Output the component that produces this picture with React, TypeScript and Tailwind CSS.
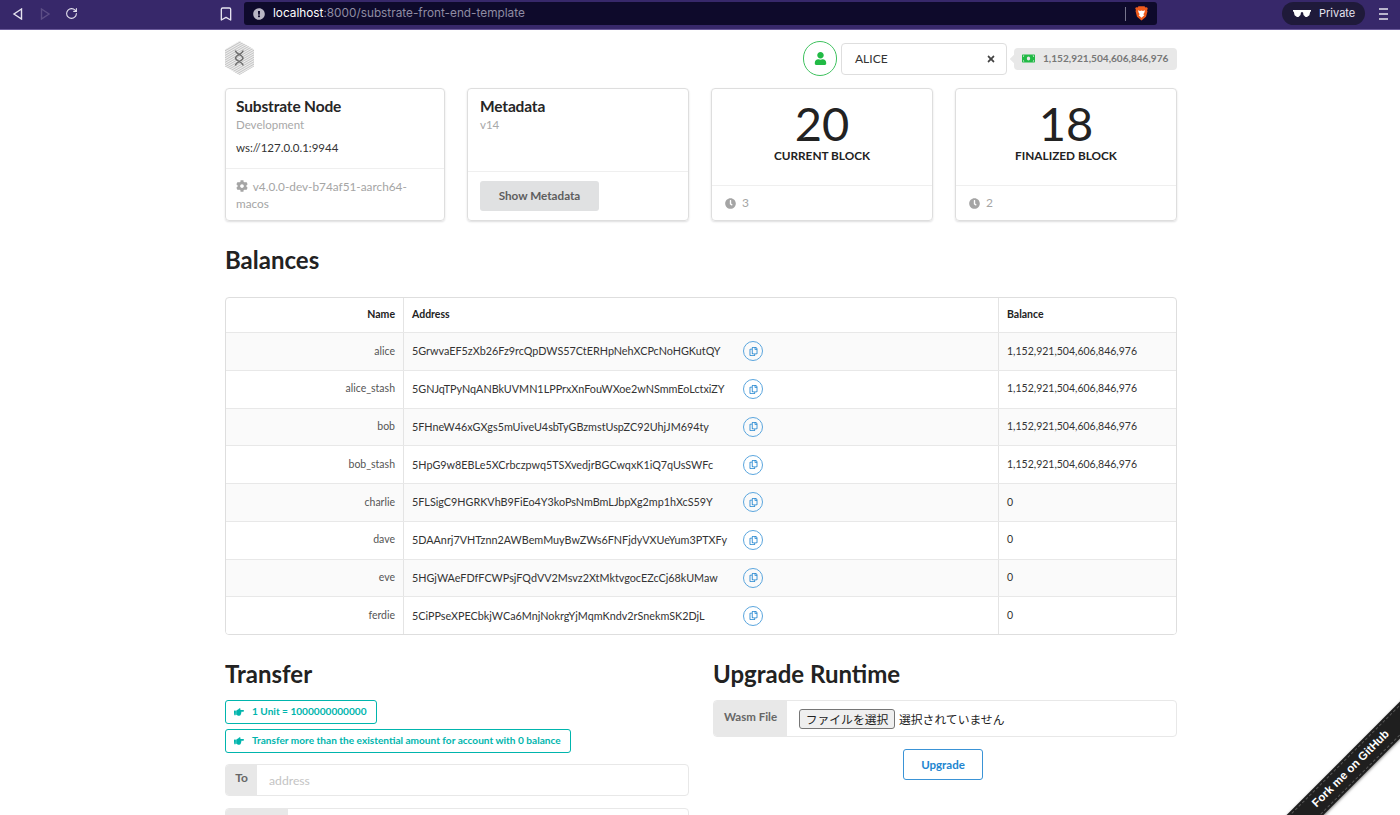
import { Bookmark, RotateCw } from 'lucide-react';
import { FaClock, FaCog, FaRegCopy, FaHandPointRight, FaMoneyBill, FaTimes, FaUser, FaExclamationCircle } from 'react-icons/fa';

const accounts = [
  { name: 'alice', address: '5GrwvaEF5zXb26Fz9rcQpDWS57CtERHpNehXCPcNoHGKutQY', balance: '1,152,921,504,606,846,976', shaded: true },
  { name: 'alice_stash', address: '5GNJqTPyNqANBkUVMN1LPPrxXnFouWXoe2wNSmmEoLctxiZY', balance: '1,152,921,504,606,846,976', shaded: false },
  { name: 'bob', address: '5FHneW46xGXgs5mUiveU4sbTyGBzmstUspZC92UhjJM694ty', balance: '1,152,921,504,606,846,976', shaded: true },
  { name: 'bob_stash', address: '5HpG9w8EBLe5XCrbczpwq5TSXvedjrBGCwqxK1iQ7qUsSWFc', balance: '1,152,921,504,606,846,976', shaded: false },
  { name: 'charlie', address: '5FLSigC9HGRKVhB9FiEo4Y3koPsNmBmLJbpXg2mp1hXcS59Y', balance: '0', shaded: true },
  { name: 'dave', address: '5DAAnrj7VHTznn2AWBemMuyBwZWs6FNFjdyVXUeYum3PTXFy', balance: '0', shaded: false },
  { name: 'eve', address: '5HGjWAeFDfFCWPsjFQdVV2Msvz2XtMktvgocEZcCj68kUMaw', balance: '0', shaded: true },
  { name: 'ferdie', address: '5CiPPseXPECbkjWCa6MnjNokrgYjMqmKndv2rSnekmSK2DjL', balance: '0', shaded: false },
];

function BrowserBar() {
  return (
    <div className="flex h-[30px] items-center border-b border-[#6a5a9a] bg-[#37286a] font-['Inter',sans-serif]">
      <div className="flex w-[244px] items-center pb-[2px] pl-[12px]">
        <svg width="11" height="12" viewBox="0 0 11 12" fill="none" stroke="#e6e3ef" strokeWidth="1.4"><path d="M9.500 1 2 6l7.500 5z" /></svg>
        <svg className="ml-[17px]" width="11" height="12" viewBox="0 0 11 12" fill="none" stroke="#5d4e86" strokeWidth="1.4"><path d="M1.500 1 9 6l-7.500 5z" /></svg>
        <RotateCw className="ml-[14px] text-[#e6e3ef]" size={13} strokeWidth={2} />
        <Bookmark className="ml-[140px] shrink-0 text-[#e6e3ef]" size={16} strokeWidth={2} />
      </div>
      <div className="mb-[2px] flex h-[23px] w-[913px] items-center rounded-[3px] bg-[#0e0a2b] pl-[9px]">
        <FaExclamationCircle className="text-[#b9b6c4]" size={12} />
        <span className="ml-[8px] text-[11.8px] text-white">localhost<span className="text-[#8f8ca3]">:8000/substrate-front-end-template</span></span>
        <div className="ml-auto mr-[9px] h-[14px] w-px bg-[#77758c]" />
        <svg className="mr-[9px]" width="13" height="15" viewBox="0 0 13 15">
          <path d="M3.500 0.300h6l1 1.200 1.500-.2.800 1.500-.8 1.500.5 1-1.500 5.500-4.500 3.700-4.500-3.700L.500 5l.5-1-.8-1.500L1 1.300l1.500.2z" fill="#ee5a1c" />
          <path d="M3 4.200 5 5l1.500-.5L8 5l2-.8-.6 2.300-1.100 1.700 1 1-2.800 2.600L3.700 9.200l1-1-1.100-1.700z" fill="#fff" />
        </svg>
      </div>
      <div className="mb-[2px] ml-auto mr-[14px] flex h-[23px] w-[83px] items-center gap-[8px] rounded-full bg-[#1f1a3a] pl-[11px] text-[11px] text-[#e6e3ef]">
        <svg width="18" height="7" viewBox="0 0 18 7" fill="#fff"><path d="M0 0h18v1.400l-.8.4-.8 3.400L14 7h-1.500L10.500 5 10 2.300H8L7.500 5 5.500 7H4L1.600 5.200.8 1.800 0 1.400z" /></svg>
        Private
      </div>
      <div className="mb-[2px] mr-[12px] flex w-[9px] flex-col gap-[3px]">
        <div className="h-[2px] bg-[#b9b5cc]" />
        <div className="h-[2px] bg-[#b9b5cc]" />
        <div className="h-[2px] bg-[#b9b5cc]" />
      </div>
    </div>
  );
}

function Logo() {
  return (
    <svg width="29" height="34" viewBox="0 0 29 34">
      <defs>
        <pattern id="hatch" width="2" height="2" patternUnits="userSpaceOnUse" patternTransform="rotate(-30)">
          <rect width="2" height="1" fill="#c4c4c4" />
          <rect y="1" width="2" height="1" fill="#f0f0f0" />
        </pattern>
      </defs>
      <path d="M14.500 0 29 8.500v17L14.500 34 0 25.500v-17z" fill="url(#hatch)" />
      <path d="M10.500 9.500c0 3.500 7.500 4.500 7.500 7.500s-7.500 4-7.500 7.500M18 9.500c0 3.500-7.500 4.500-7.500 7.500s7.500 4 7.500 7.500" fill="none" stroke="#6e6e6e" strokeWidth="1.500" />
    </svg>
  );
}

function Header() {
  return (
    <div className="flex h-[58px] items-start justify-between pt-[11px]">
      <Logo />
      <div className="flex items-center">
        <div className="flex h-[35px] w-[34px] items-center justify-center rounded-full border border-[#3fc25f] text-[#21ba45]">
          <FaUser size={13} />
        </div>
        <div className="ml-[4px] flex h-[32px] w-[166px] items-center justify-between rounded-[4px] border border-[#dedede] pl-[13px] pr-[10px] text-[12px] text-[#333]">
          ALICE
          <FaTimes size={10} className="text-[#444]" />
        </div>
        <div className="relative ml-[7px] flex h-[22px] w-[163px] items-center rounded-[4px] bg-[#e8e8e8] pl-[8px] text-[10.1px] font-bold text-[#777]">
          <div className="absolute -left-[3px] top-[8px] h-[6px] w-[6px] rotate-45 bg-[#e8e8e8]" />
          <FaMoneyBill size={13} className="mr-[8px] text-[#21ba45]" />
          1,152,921,504,606,846,976
        </div>
      </div>
    </div>
  );
}

function Card({ children, footer, footerClass }: { children: React.ReactNode; footer: React.ReactNode; footerClass: string }) {
  return (
    <div className="flex h-[133px] flex-col rounded-[4px] border border-[#dedede] shadow-[0_1px_2px_rgba(34,36,38,0.15)]">
      <div className="flex-1">{children}</div>
      <div className={`border-t border-[#efefef] ${footerClass}`}>{footer}</div>
    </div>
  );
}

function BlockCard({ value, label, since }: { value: string; label: string; since: string }) {
  return (
    <Card
      footerClass="flex h-[35px] items-center gap-[6px] px-[13px] text-[12px] text-[#a5a5a5]"
      footer={<><FaClock size={11} />{' '}{since}</>}
    >
      <div className="pt-[9px] text-center text-[#222]">
        <div className="text-[47px] leading-[50px]">{value}</div>
        <div className="text-[11.8px] font-bold leading-[16px]">{label}</div>
      </div>
    </Card>
  );
}

function Cards() {
  return (
    <div className="grid grid-cols-[220px_222px_222px_222px] gap-[22px]">
      <Card
        footerClass="h-[52px] px-[10px] pt-[9px] text-[11.8px] leading-[17px] text-[#a5a5a5]"
        footer={<><FaCog size={12} className="mr-[2px] inline align-[-1px]" /> v4.0.0-dev-b74af51-aarch64-macos</>}
      >
        <div className="px-[10px] pt-[7px]">
          <div className="text-[15.5px] font-bold leading-[20px] tracking-[-0.01em] text-[#262626]">Substrate Node</div>
          <div className="mt-[1px] text-[11.5px] leading-[16px] text-[#a8a8a8]">Development</div>
          <div className="mt-[7px] text-[11.5px] leading-[16px] text-[#333]">ws://127.0.0.1:9944</div>
        </div>
      </Card>
      <Card
        footerClass="h-[49px] px-[12px] pt-[9px]"
        footer={<button className="h-[30px] w-[119px] rounded-[3px] bg-[#e0e1e2] text-[11.7px] font-bold text-[#5e5e5e]">Show Metadata</button>}
      >
        <div className="px-[12px] pt-[7px]">
          <div className="text-[15.5px] font-bold leading-[20px] tracking-[-0.01em] text-[#262626]">Metadata</div>
          <div className="mt-[1px] text-[11.5px] leading-[16px] text-[#a8a8a8]">v14</div>
        </div>
      </Card>
      <BlockCard value="20" label="CURRENT BLOCK" since="3" />
      <BlockCard value="18" label="FINALIZED BLOCK" since="2" />
    </div>
  );
}

function Balances() {
  return (
    <div>
      <h1 className="mt-[24px] text-[24px] font-bold leading-[30px] text-[#222]">Balances</h1>
      <div className="mt-[22px] overflow-hidden rounded-[4px] border border-[#dedede] text-[10.5px] text-[#333]">
        <div className="flex h-[34px] items-center font-bold text-[#222]">
          <div className="flex h-full w-[178px] items-center justify-end border-r border-[#e4e4e4] pr-[8px]">Name</div>
          <div className="flex h-full w-[595px] items-center border-r border-[#e4e4e4] pl-[8px]">Address</div>
          <div className="pl-[8px]">Balance</div>
        </div>
        {accounts.map(a => (
          <div key={a.name} className={`flex h-[37.750px] items-center border-t border-[#e8e8e8] ${a.shaded ? 'bg-[#fafafa]' : 'bg-white'}`}>
            <div className="flex h-full w-[178px] items-center justify-end border-r border-[#e4e4e4] pr-[8px] text-[#555]">{a.name}</div>
            <div className="flex h-full w-[595px] items-center border-r border-[#e4e4e4] pl-[8px]">
              <span className="w-[331px] text-[10.8px]">{a.address}</span>
              <div className="flex h-[20px] w-[20px] items-center justify-center rounded-full border border-[#5ba6de] text-[#2185d0]">
                <FaRegCopy size={9} />
              </div>
            </div>
            <div className="pl-[8px]">{a.balance}</div>
          </div>
        ))}
      </div>
    </div>
  );
}

function Notice({ children }: { children: React.ReactNode }) {
  return (
    <div className="flex h-[24px] w-fit items-center rounded-[3px] border border-[#00b5ad] pl-[8px] pr-[9px] text-[10.100px] font-bold text-[#00b5ad]">
      <FaHandPointRight size={10} className="mr-[8px]" />
      {children}
    </div>
  );
}

function Transfer() {
  return (
    <div>
      <h1 className="text-[24px] font-bold leading-[30px] text-[#222]">Transfer</h1>
      <div className="mt-[11px] flex flex-col gap-[5px]">
        <Notice>1 Unit = 1000000000000</Notice>
        <Notice>Transfer more than the existential amount for account with 0 balance</Notice>
      </div>
      <div className="mt-[11px] flex h-[32px] overflow-hidden rounded-[4px] border border-[#e8e8e8]">
        <div className="flex w-[31px] justify-center bg-[#e8e8e8] pt-[4px] text-[12px] font-bold text-[#666]">To</div>
        <div className="pl-[12px] pt-[7px] text-[12.200px] text-[#c4c4c4]">address</div>
      </div>
      <div className="mt-[12px] flex h-[32px] overflow-hidden rounded-[4px] border border-[#e8e8e8]">
        <div className="w-[62px] bg-[#e8e8e8]" />
      </div>
    </div>
  );
}

function Upgrade() {
  return (
    <div>
      <h1 className="text-[24px] font-bold leading-[30px] text-[#222]">Upgrade Runtime</h1>
      <div className="mt-[11px] flex h-[37px] overflow-hidden rounded-[4px] border border-[#e8e8e8]">
        <div className="flex w-[73px] justify-center bg-[#e8e8e8] pt-[7px] text-[11.5px] font-bold text-[#666]">Wasm File</div>
        <div className="flex items-center pl-[12px] font-['Noto_Sans_CJK_JP',sans-serif] text-[11.8px] text-[#222]">
          <span className="flex h-[20px] w-[96px] items-center justify-center rounded-[3px] border border-[#767676] bg-[#efefef]">ファイルを選択</span>
          <span className="ml-[4px]">選択されていません</span>
        </div>
      </div>
      <div className="mt-[12px] flex justify-center pr-[4px]">
        <button className="h-[31px] w-[80px] rounded-[3px] border border-[#3a93d6] text-[11.5px] font-bold text-[#2185d0]">Upgrade</button>
      </div>
    </div>
  );
}

export default function App() {
  return (
    <div className="relative h-[815px] w-[1400px] overflow-hidden bg-white font-['Lato',sans-serif]">
      <BrowserBar />
      <div className="ml-[225px] w-[952px]">
        <Header />
        <Cards />
        <Balances />
        <div className="mt-[24px] grid grid-cols-2 gap-[24px]">
          <Transfer />
          <Upgrade />
        </div>
      </div>
      <div className="absolute -right-[60.500px] bottom-[33.500px] flex h-[26px] w-[220px] -rotate-45 items-center justify-center bg-[#1f1f1f] p-[2px] font-['Liberation_Sans',sans-serif] text-[11.500px] font-bold text-white shadow-[0_1px_3px_rgba(0,0,0,0.5)]">
        <div className="flex h-full w-full items-center justify-center border-y border-dashed border-white/25">Fork me on GitHub</div>
      </div>
    </div>
  );
}
